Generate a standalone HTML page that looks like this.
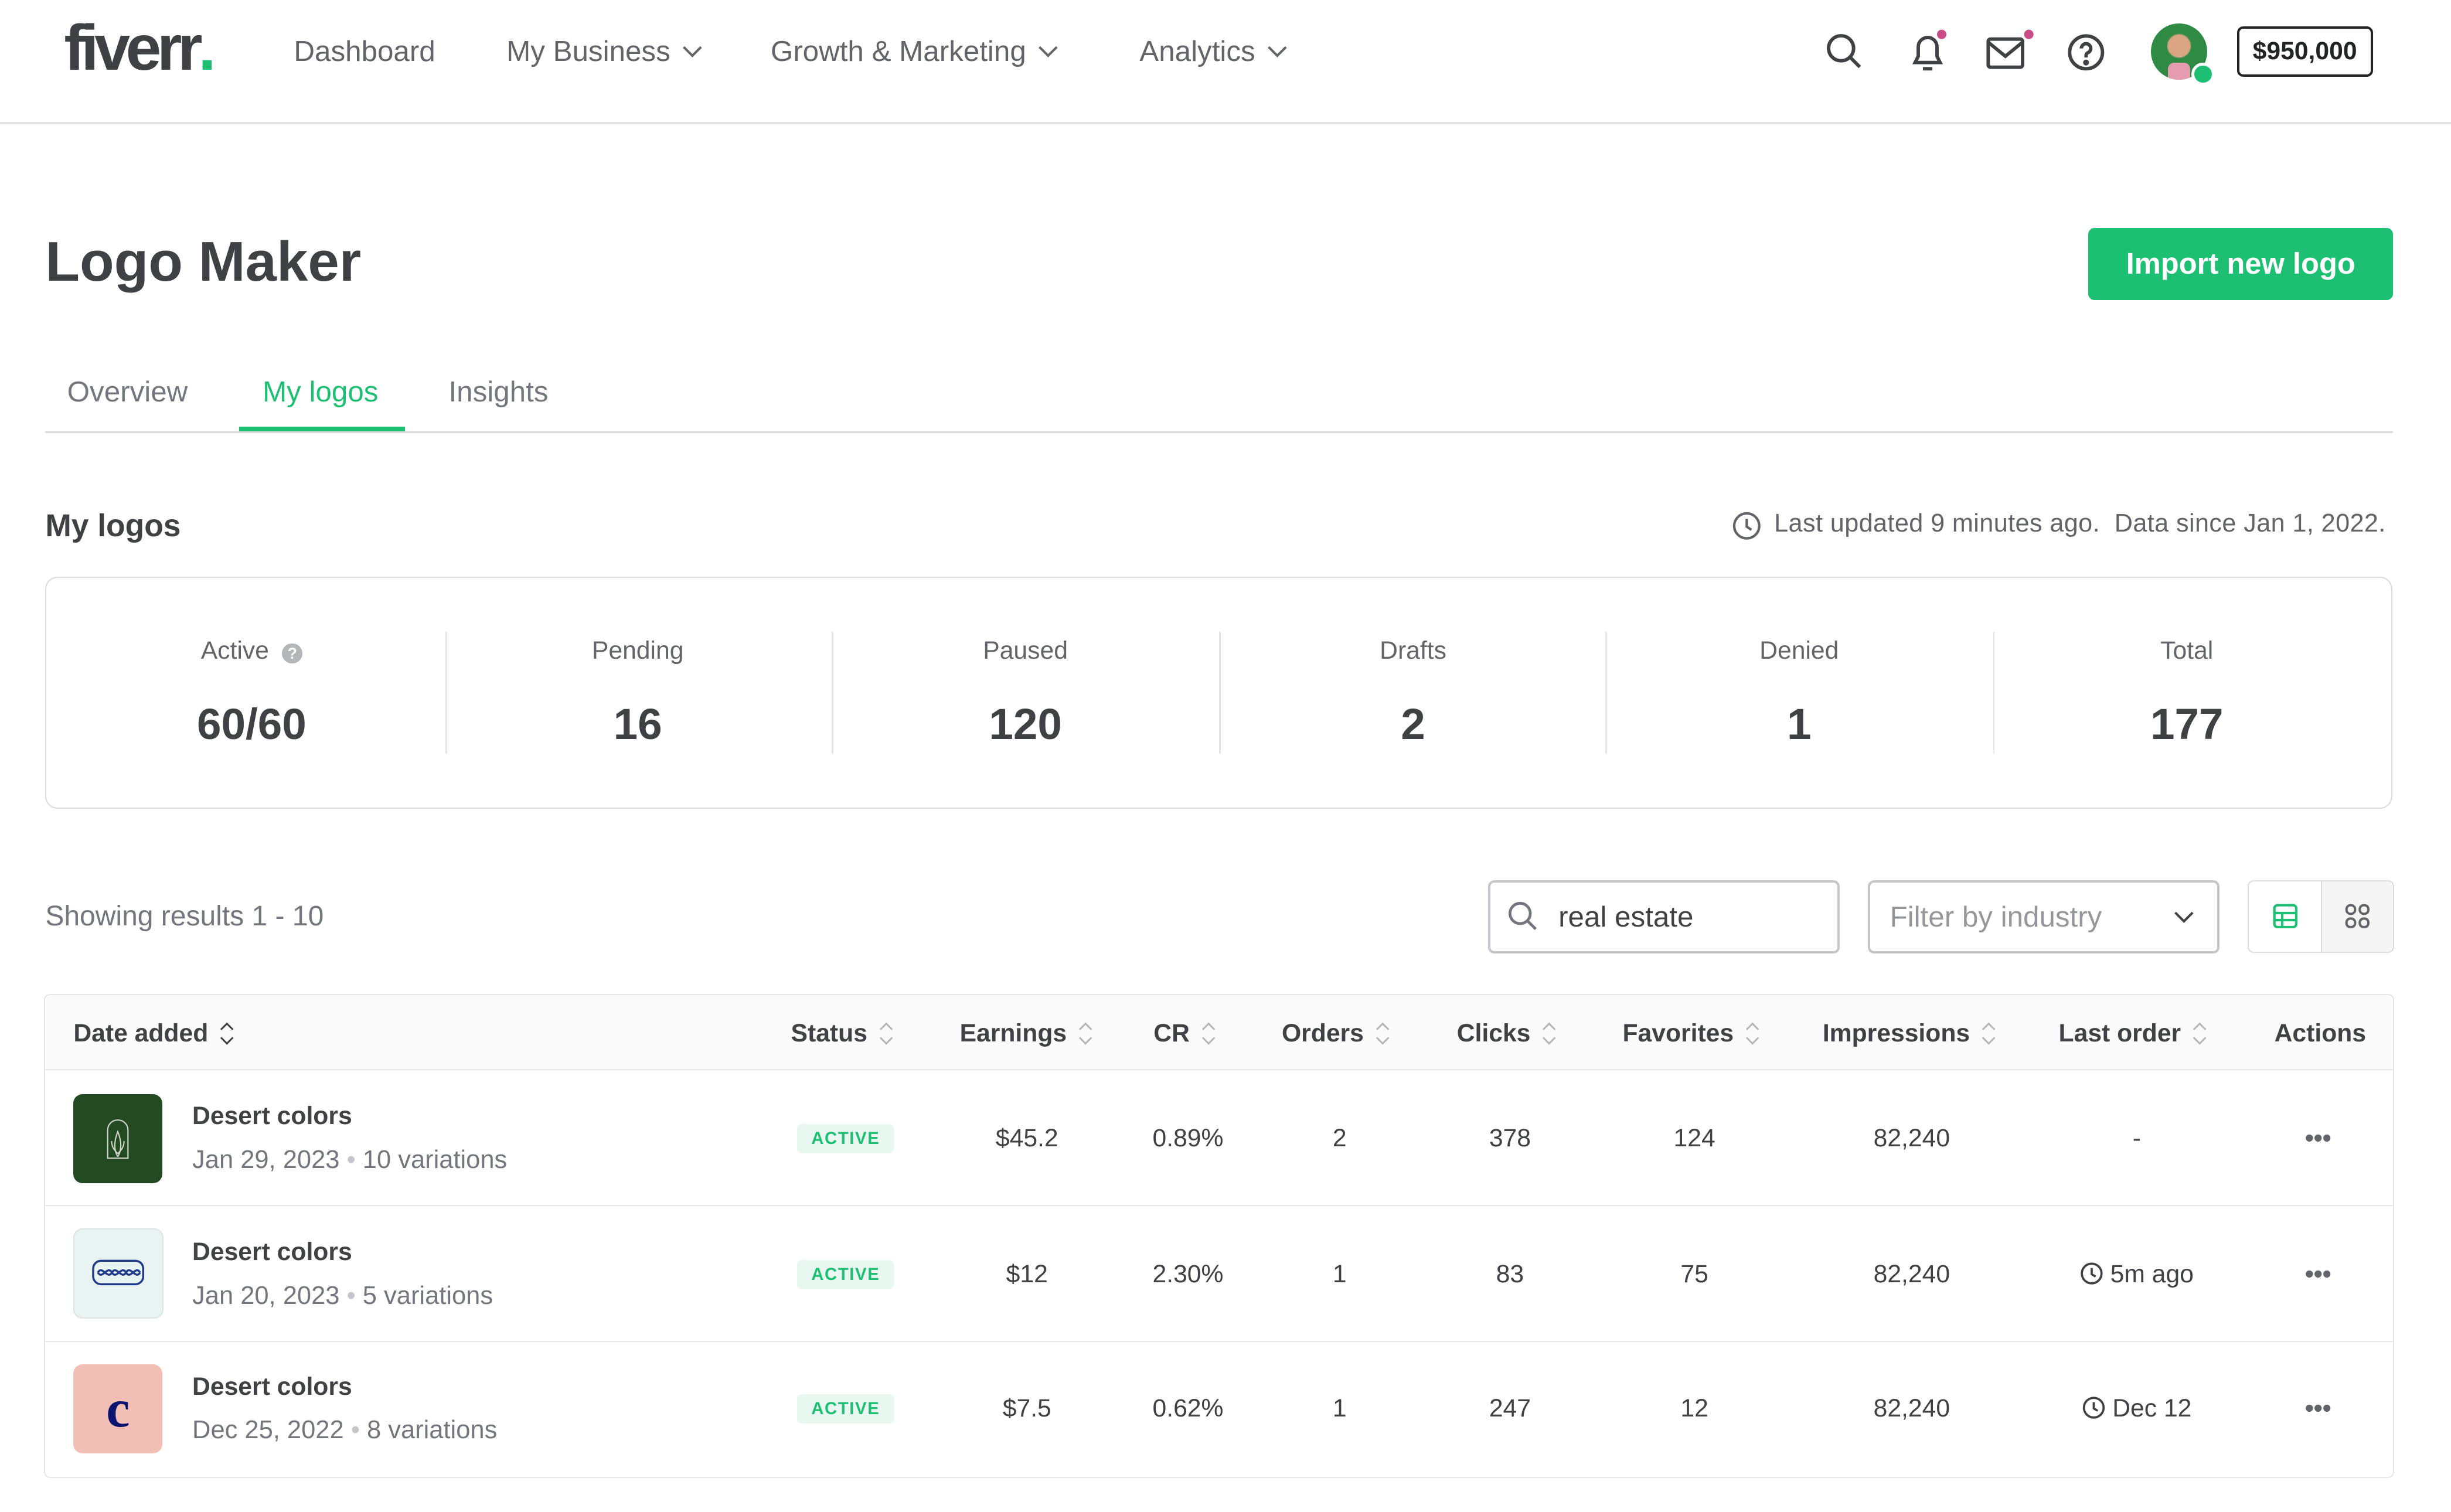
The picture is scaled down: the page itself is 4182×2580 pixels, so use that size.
<!DOCTYPE html>
<html><head><meta charset="utf-8"><style>
html,body{margin:0;padding:0;background:#fff;width:4182px;height:2580px;overflow:hidden}
#w{zoom:2.66709;position:relative;width:1568px;height:967px;font-family:"Liberation Sans",sans-serif;color:#404145}
.a{position:absolute;white-space:nowrap}
.nav{font-size:18.5px;color:#62646a;top:22px}
.chev{display:inline-block;width:7px;height:7px;border-right:1.6px solid #62646a;border-bottom:1.6px solid #62646a;transform:rotate(45deg);margin-left:10px;position:relative;top:-4px}
.lbl{font-size:16px;color:#62646a;text-align:center;width:250px;top:407px}
.val{font-size:28px;font-weight:bold;color:#404145;text-align:center;width:250px;top:447px}
.div{top:404px;width:1px;height:78px;background:#e4e5e7}
.th{font-size:16px;font-weight:bold;color:#404145;top:652px}
.s{display:inline-block;width:8px;height:14px;vertical-align:-2px;margin-left:8px;position:relative}
.s:before,.s:after{content:"";position:absolute;left:1px;width:5px;height:5px;border-left:1.3px solid #b5b6ba;border-top:1.3px solid #b5b6ba}
.s:before{top:1px;transform:rotate(45deg)}
.s:after{bottom:1px;transform:rotate(-135deg)}
.s.d:before,.s.d:after{border-color:#404145}
.row{left:29px;width:1502px;height:86px;border-top:1px solid #e4e5e7}
.td{font-size:16px;color:#404145;transform:translateX(-50%)}
.badge{font-size:11px;font-weight:bold;color:#1dbf73;background:#e8f8f1;padding:3px 9px;letter-spacing:.6px;border-radius:3px}
.t1{font-size:16px;color:#404145;font-weight:bold}
.t2{font-size:16.3px;color:#74767e}
.dots{font-size:16px;font-weight:bold;color:#62646a;letter-spacing:0px}
</style></head><body><div id="w">
<!-- header -->
<div class="a" style="left:41px;top:7px;font-size:41px;font-weight:bold;color:#404145;letter-spacing:-2.8px">fiverr<span style="color:#1dbf73;letter-spacing:0">.</span></div>
<div class="a nav" style="left:188px">Dashboard</div>
<div class="a nav" style="left:324px">My Business<span class="chev"></span></div>
<div class="a nav" style="left:493px">Growth &amp; Marketing<span class="chev"></span></div>
<div class="a nav" style="left:729px">Analytics<span class="chev"></span></div>
<svg class="a" style="left:1167px;top:20px" width="26" height="26" viewBox="0 0 26 26" fill="none" stroke="#404145" stroke-width="2.2"><circle cx="11" cy="11" r="8"/><path d="M17 17l6 6"/></svg>
<svg class="a" style="left:1218px;top:18px" width="30" height="30" viewBox="0 0 30 30" fill="none" stroke="#404145" stroke-width="2.2"><path d="M7 22h16l-2-4v-6a6 6 0 0 0-12 0v6z"/><path d="M12 26h6"/><circle cx="24" cy="4" r="3" fill="#c94b87" stroke="none"/></svg>
<svg class="a" style="left:1270px;top:18px" width="32" height="30" viewBox="0 0 32 30" fill="none" stroke="#404145" stroke-width="2.2"><rect x="2" y="7" width="22" height="18" rx="1.5"/><path d="M2 9l11 9 11-9"/><circle cx="28" cy="4" r="3" fill="#c94b87" stroke="none"/></svg>
<svg class="a" style="left:1322px;top:21px" width="25" height="25" viewBox="0 0 25 25" fill="none" stroke="#404145" stroke-width="2.2"><circle cx="12.5" cy="12.5" r="10.5"/><path d="M9.5 10a3 3 0 1 1 4 2.8c-.8.4-1 1-1 2v1"/><circle cx="12.5" cy="19" r=".8" fill="#404145"/></svg>
<div class="a" style="left:1376px;top:15px;width:36px;height:36px;border-radius:50%;background:radial-gradient(circle at 50% 40%,#d9a582 0 7px,#2f8a44 8px);overflow:hidden"><div style="position:absolute;left:11px;top:25px;width:14px;height:12px;background:#e59bb0;border-radius:4px 4px 0 0"></div></div>
<div class="a" style="left:1402px;top:40px;width:11px;height:11px;border-radius:50%;background:#1dbf73;border:2px solid #fff"></div>
<div class="a" style="left:1431px;top:17px;width:84px;height:29px;border:1.5px solid #222325;border-radius:4px;font-size:16px;font-weight:bold;color:#222325;text-align:center;line-height:29px">$950,000</div>
<div class="a" style="left:0;top:78px;width:1568px;height:1.5px;background:#e4e5e7"></div>
<!-- title -->
<div class="a" style="left:29px;top:147px;font-size:36px;font-weight:bold;color:#404145">Logo Maker</div>
<div class="a" style="left:1336px;top:146px;width:195px;height:46px;background:#1dbf73;border-radius:4px;color:#fff;font-size:19px;font-weight:bold;text-align:center;line-height:46px">Import new logo</div>
<!-- tabs -->
<div class="a" style="left:43px;top:240px;font-size:18.5px;color:#74767e">Overview</div>
<div class="a" style="left:168px;top:240px;font-size:18.5px;color:#1dbf73">My logos</div>
<div class="a" style="left:287px;top:240px;font-size:18.5px;color:#74767e">Insights</div>
<div class="a" style="left:29px;top:276px;width:1502px;height:1px;background:#dadbdd"></div>
<div class="a" style="left:153px;top:273px;width:106px;height:3px;background:#1dbf73"></div>
<!-- my logos -->
<div class="a" style="left:29px;top:325px;font-size:20px;font-weight:bold">My logos</div>
<svg class="a" style="left:1108px;top:327px" width="19" height="19" viewBox="0 0 19 19" fill="none" stroke="#62646a" stroke-width="1.6"><circle cx="9.5" cy="9.5" r="8"/><path d="M9.5 5v5l3 2"/></svg>
<div class="a" style="left:1135px;top:326px;font-size:16.2px;color:#62646a;letter-spacing:0.15px">Last updated 9 minutes ago.&nbsp; Data since Jan 1, 2022.</div>
<!-- stats -->
<div class="a" style="left:29px;top:369px;width:1500px;height:147px;border:1px solid #dadbdd;border-radius:8px"></div>
<div class="a lbl" style="left:36px">Active <span style="display:inline-block;width:13px;height:13px;border-radius:50%;background:#b5b6ba;color:#fff;font-size:10px;line-height:13px;font-weight:bold;vertical-align:0;margin-left:4px">?</span></div>
<div class="a val" style="left:36px">60/60</div>
<div class="a div" style="left:285px"></div>
<div class="a lbl" style="left:283px">Pending</div><div class="a val" style="left:283px">16</div>
<div class="a div" style="left:532px"></div>
<div class="a lbl" style="left:531px">Paused</div><div class="a val" style="left:531px">120</div>
<div class="a div" style="left:780px"></div>
<div class="a lbl" style="left:779px">Drafts</div><div class="a val" style="left:779px">2</div>
<div class="a div" style="left:1027px"></div>
<div class="a lbl" style="left:1026px">Denied</div><div class="a val" style="left:1026px">1</div>
<div class="a div" style="left:1275px"></div>
<div class="a lbl" style="left:1274px">Total</div><div class="a val" style="left:1274px">177</div>
<!-- filters -->
<div class="a" style="left:29px;top:576px;font-size:18px;color:#74767e">Showing results 1 - 10</div>
<div class="a" style="left:952px;top:563px;width:222px;height:44px;border:1.5px solid #c5c6c9;border-radius:4px"></div>
<svg class="a" style="left:964px;top:576px" width="20" height="20" viewBox="0 0 20 20" fill="none" stroke="#74767e" stroke-width="1.8"><circle cx="8.5" cy="8.5" r="6.5"/><path d="M13.5 13.5l5 5"/></svg>
<div class="a" style="left:997px;top:576px;font-size:18.5px;color:#404145">real estate</div>
<div class="a" style="left:1195px;top:563px;width:222px;height:44px;border:1.5px solid #c5c6c9;border-radius:4px"></div>
<div class="a" style="left:1209px;top:576px;font-size:18.5px;color:#95979d">Filter by industry</div>
<div class="a" style="left:1393px;top:580px;width:7px;height:7px;border-right:1.6px solid #404145;border-bottom:1.6px solid #404145;transform:rotate(45deg)"></div>
<div class="a" style="left:1438px;top:563px;width:92px;height:45px;border:1px solid #dadbdd;border-radius:4px;overflow:hidden"><div style="position:absolute;left:46px;top:0;width:46px;height:45px;background:#f5f5f5;border-left:1px solid #dadbdd"></div></div>
<svg class="a" style="left:1454px;top:578px" width="16" height="16" viewBox="0 0 16 16" fill="none" stroke="#1dbf73" stroke-width="1.6"><rect x="1" y="1" width="14" height="14" rx="2"/><path d="M1 6h14M1 10.5h14M6 6v9"/></svg>
<svg class="a" style="left:1500px;top:578px" width="16" height="16" viewBox="0 0 16 16" fill="none" stroke="#62646a" stroke-width="1.5"><rect x="1" y="1" width="5.5" height="5.5" rx="2.5"/><rect x="9.5" y="1" width="5.5" height="5.5" rx="2.5"/><rect x="1" y="9.5" width="5.5" height="5.5" rx="2.5"/><rect x="9.5" y="9.5" width="5.5" height="5.5" rx="2.5"/></svg>
<!-- table -->
<div class="a" style="left:28px;top:636px;width:1502px;height:308px;border:1px solid #e4e5e7;border-radius:4px"></div>
<div class="a" style="left:29px;top:637px;width:1502px;height:48px;background:#fafafa;border-radius:4px 4px 0 0"></div>
<div class="a th" style="left:47px">Date added<span class="s d"></span></div>
<div class="a th" style="left:506px">Status<span class="s"></span></div>
<div class="a th" style="left:614px">Earnings<span class="s"></span></div>
<div class="a th" style="left:738px">CR<span class="s"></span></div>
<div class="a th" style="left:820px">Orders<span class="s"></span></div>
<div class="a th" style="left:932px">Clicks<span class="s"></span></div>
<div class="a th" style="left:1038px">Favorites<span class="s"></span></div>
<div class="a th" style="left:1166px">Impressions<span class="s"></span></div>
<div class="a th" style="left:1317px">Last order<span class="s"></span></div>
<div class="a th" style="left:1455px">Actions</div>

<div class="a row" style="top:684px"></div>
<div class="a row" style="top:771px"></div>
<div class="a row" style="top:858px;border-top:1px solid #e4e5e7;height:0"></div>

<!-- row 1 -->
<div class="a" style="left:47px;top:700px;width:57px;height:57px;border-radius:6px;background:#234a22"><svg width="57" height="57" viewBox="0 0 57 57" fill="none" stroke="#cfd8c8" stroke-width=".8"><path d="M22 41V23a6.5 6.5 0 0 1 13 0v18z"/><path d="M28.5 40c-3-5-2-11 0-16 2 5 3 11 0 16M28.5 38c-2-2-4-4-4-8M28.5 38c2-2 4-4 4-8"/></svg></div>
<div class="a t1" style="left:123px;top:705px">Desert colors</div>
<div class="a t2" style="left:123px;top:733px">Jan 29, 2023 <span style="color:#c5c6c9">•</span> 10 variations</div>
<div class="a badge" style="left:510px;top:719px">ACTIVE</div>
<div class="a td" style="left:657px;top:719px">$45.2</div>
<div class="a td" style="left:760px;top:719px">0.89%</div>
<div class="a td" style="left:857px;top:719px">2</div>
<div class="a td" style="left:966px;top:719px">378</div>
<div class="a td" style="left:1084px;top:719px">124</div>
<div class="a td" style="left:1223px;top:719px">82,240</div>
<div class="a td" style="left:1367px;top:719px">-</div>
<div class="a td dots" style="left:1483px;top:719px">•••</div>

<!-- row 2 -->
<div class="a" style="left:47px;top:786px;width:56px;height:56px;border-radius:6px;background:#e8f4f1;border:1px solid #dde3e1"><svg width="56" height="56" viewBox="0 0 56 56" fill="none" stroke="#1f3a8a" stroke-width="1.3"><rect x="12" y="20" width="32" height="15" rx="5"/><path d="M15 27.5c3-5 6 5 9 0s6 5 9 0 6 5 9 0M15 27.5c3 5 6-5 9 0s6-5 9 0 6-5 9 0"/></svg></div>
<div class="a t1" style="left:123px;top:792px">Desert colors</div>
<div class="a t2" style="left:123px;top:820px">Jan 20, 2023 <span style="color:#c5c6c9">•</span> 5 variations</div>
<div class="a badge" style="left:510px;top:806px">ACTIVE</div>
<div class="a td" style="left:657px;top:806px">$12</div>
<div class="a td" style="left:760px;top:806px">2.30%</div>
<div class="a td" style="left:857px;top:806px">1</div>
<div class="a td" style="left:966px;top:806px">83</div>
<div class="a td" style="left:1084px;top:806px">75</div>
<div class="a td" style="left:1223px;top:806px">82,240</div>
<div class="a td" style="left:1367px;top:806px"><svg width="15" height="15" viewBox="0 0 15 15" fill="none" stroke="#404145" stroke-width="1.4" style="vertical-align:-2px"><circle cx="7.5" cy="7.5" r="6.3"/><path d="M7.5 4v4l2.5 1.5"/></svg> 5m ago</div>
<div class="a td dots" style="left:1483px;top:806px">•••</div>

<!-- row 3 -->
<div class="a" style="left:47px;top:873px;width:57px;height:57px;border-radius:6px;background:#f1bfb6"><div style="font-family:'Liberation Serif',serif;font-size:34px;font-weight:bold;color:#0d1570;text-align:center;line-height:57px">c</div></div>
<div class="a t1" style="left:123px;top:878px">Desert colors</div>
<div class="a t2" style="left:123px;top:906px">Dec 25, 2022 <span style="color:#c5c6c9">•</span> 8 variations</div>
<div class="a badge" style="left:510px;top:892px">ACTIVE</div>
<div class="a td" style="left:657px;top:892px">$7.5</div>
<div class="a td" style="left:760px;top:892px">0.62%</div>
<div class="a td" style="left:857px;top:892px">1</div>
<div class="a td" style="left:966px;top:892px">247</div>
<div class="a td" style="left:1084px;top:892px">12</div>
<div class="a td" style="left:1223px;top:892px">82,240</div>
<div class="a td" style="left:1367px;top:892px"><svg width="15" height="15" viewBox="0 0 15 15" fill="none" stroke="#404145" stroke-width="1.4" style="vertical-align:-2px"><circle cx="7.5" cy="7.5" r="6.3"/><path d="M7.5 4v4l2.5 1.5"/></svg> Dec 12</div>
<div class="a td dots" style="left:1483px;top:892px">•••</div>
</div></body></html>
